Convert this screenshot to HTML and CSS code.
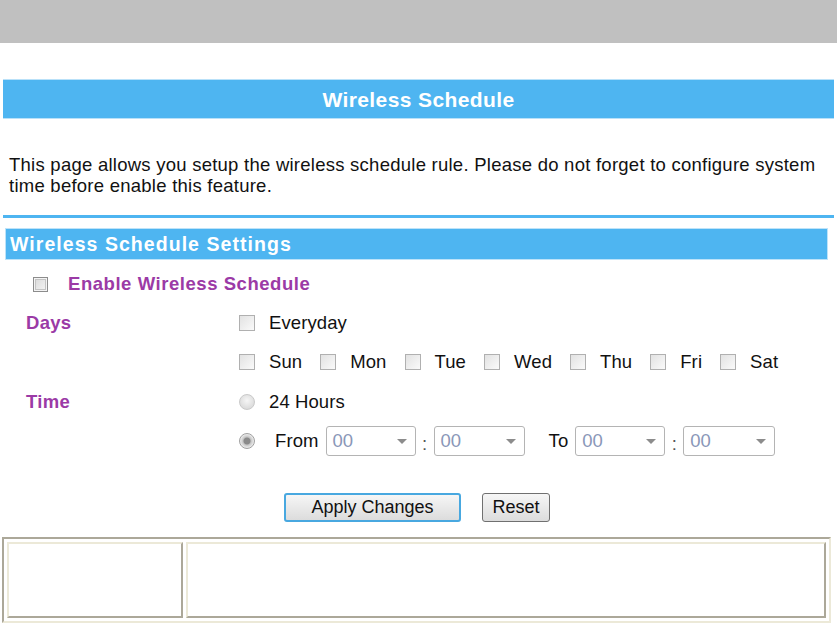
FILE: index.html
```html
<!DOCTYPE html>
<html>
<head>
<meta charset="utf-8">
<link rel="stylesheet" href="styles.css">
</head>
<body>
<div class="topbar"></div>
<div class="page">
  <div class="title">Wireless Schedule</div>
  <p class="intro">This page allows you setup the wireless schedule rule. Please do not forget to configure system time before enable this feature.</p>
  <div class="rule"></div>
  <div class="section">Wireless Schedule Settings</div>
  <div class="enable-row"><span class="cb big"></span><span class="enable-label">Enable Wireless Schedule</span></div>
  <div class="form">
    <div class="label days">Days</div>
    <div class="field row1"><span class="cb"></span><span class="opt">Everyday</span></div>
    <div class="field row2">
      <span class="cb"></span><span class="opt">Sun</span>
      <span class="cb"></span><span class="opt">Mon</span>
      <span class="cb"></span><span class="opt">Tue</span>
      <span class="cb"></span><span class="opt">Wed</span>
      <span class="cb"></span><span class="opt">Thu</span>
      <span class="cb"></span><span class="opt">Fri</span>
      <span class="cb"></span><span class="opt">Sat</span>
    </div>
    <div class="label time">Time</div>
    <div class="field row3"><span class="radio"></span><span class="opt">24 Hours</span></div>
    <div class="field row4"><span class="radio on"></span><span class="opt from">From</span>
      <span class="sel w90">00<i class="arr"></i></span><span class="colon">:</span>
      <span class="sel w91">00<i class="arr"></i></span>
      <span class="opt to">To</span>
      <span class="sel w90">00<i class="arr"></i></span><span class="colon">:</span>
      <span class="sel w92">00<i class="arr"></i></span>
    </div>
  </div>
  <div class="buttons">
    <button class="btn apply">Apply Changes</button>
    <button class="btn reset">Reset</button>
  </div>
</div>
<div class="status">
  <div class="cell c1"></div>
  <div class="cell c2"></div>
</div>
</body>
</html>
```
FILE: styles.css
```css
html, body { margin: 0; padding: 0; background: #fff; }
body { font-family: "Liberation Sans", Arial, sans-serif; color: #000; width: 837px; height: 623px; overflow: hidden; }
.topbar { height: 43px; background: #c0c0c0; }
.page { padding: 36px 3px 0 3px; }
.title {
  height: 38px; background: #4eb5f1;
  border-top: 1px solid #b9e1f9; border-bottom: 1px solid #b9e1f9;
  color: #fff; font-weight: bold; font-size: 21px; letter-spacing: 0.4px; line-height: 39px;
  text-align: center; width: 831px;
}
.intro { margin: 35px 0 0 6px; font-size: 18.5px; letter-spacing: 0.25px; line-height: 21px; width: 822px; color: #111; }
.rule { margin-top: 19px; height: 3px; background: #4eb5f1; width: 831px; }
.section {
  margin: 10px 0 0 2px; width: 817px; height: 30px; background: #4eb5f1;
  border: 1px solid #bde3f9; color: #fff; font-weight: bold; font-size: 19.5px;
  line-height: 31px; padding-left: 4px; letter-spacing: 1.05px; box-sizing: content-box;
}
.cb {
  display: inline-block; flex: none; width: 14px; height: 14px; border: 1px solid #b0b0b0;
  background: linear-gradient(135deg, #e2e2e2, #fafafa); vertical-align: middle;
}
.cb.big { width: 13px; height: 13px; border: 1px solid #8c8c8c; box-shadow: inset 0 0 0 1px #f4f4f4, inset 0 0 0 2px #c4c4c4; background: linear-gradient(135deg, #d8d8d8, #f6f6f6); }
.enable-row { display: flex; align-items: center; height: 24px; margin: 12px 0 0 30px; }
.enable-label { color: #9b3aa6; font-weight: bold; font-size: 18.5px; letter-spacing: 0.55px; margin-left: 20px; }
.form { display: grid; grid-template-columns: 236px 1fr; grid-auto-rows: 39.3px; margin-top: 17px; }
.label { color: #9b3aa6; font-weight: bold; font-size: 18.5px; letter-spacing: 0.3px; padding-left: 23px; line-height: 20px; }
.days { grid-row: 1; }
.time { grid-row: 3; }
.field { grid-column: 2; display: flex; align-items: center; height: 20px; }
.opt { font-size: 18.5px; letter-spacing: 0.1px; color: #111; margin-left: 14px; margin-right: 18px; white-space: nowrap; }
.radio {
  display: inline-block; flex: none; width: 16px; height: 16px; border-radius: 50%;
  background: radial-gradient(circle at 50% 40%, #f6f6f6, #d2d2d2);
  border: 1px solid #cacaca; box-sizing: border-box;
}
.radio.on { background: radial-gradient(circle, #8a8a8a 0 3px, #c4c4c4 4px, #eeeeee 7px); border-color: #a0a0a0; }
.row4 .opt.from { margin-left: 20px; margin-right: 7px; }
.sel {
  position: relative; display: inline-block; flex: none; height: 30px; line-height: 28px; box-sizing: border-box;
  border: 1px solid #b4b4b4; border-radius: 3px; color: #8a97b8; font-size: 18.5px; padding-left: 6px;
  background: #fff; margin-top: 0;
}
.w90 { width: 90px; } .w91 { width: 91px; } .w92 { width: 92px; }
.arr { position: absolute; right: 8px; top: 12px; width: 0; height: 0; border-left: 5px solid transparent; border-right: 5px solid transparent; border-top: 5px solid #8c8c8c; }
.colon { font-size: 18.5px; color: #555; width: 18px; text-align: center; margin-top: 6px; flex: none; }
.row4 .opt.to { margin-left: 24px; margin-right: 7px; }
.buttons { display: flex; gap: 21px; margin: 23px 0 0 281px; }
.btn {
  font-family: "Liberation Sans", Arial, sans-serif; font-size: 18px; height: 29px;
  border-radius: 3px; background: linear-gradient(#f6f6f6, #dcdcdc); color: #111; padding: 0;
}
.apply { width: 177px; border: 2px solid #48a8e0; }
.reset { width: 68px; border: 1px solid #707070; }
.status {
  margin: 15px 0 0 2px; width: 829px; height: 86px; box-sizing: border-box;
  border-top: 2px solid #aca899; border-left: 2px solid #aca899;
  border-right: 2px solid #ece9d8; border-bottom: 2px solid #ece9d8;
  display: flex; gap: 3px; padding: 3px;
}
.cell {
  box-sizing: border-box; height: 76px;
  border-top: 2px solid #ece9d8; border-left: 2px solid #ece9d8;
  border-right: 2px solid #aca899; border-bottom: 2px solid #aca899;
}
.c1 { width: 176px; }
.c2 { flex: 1; }
```
